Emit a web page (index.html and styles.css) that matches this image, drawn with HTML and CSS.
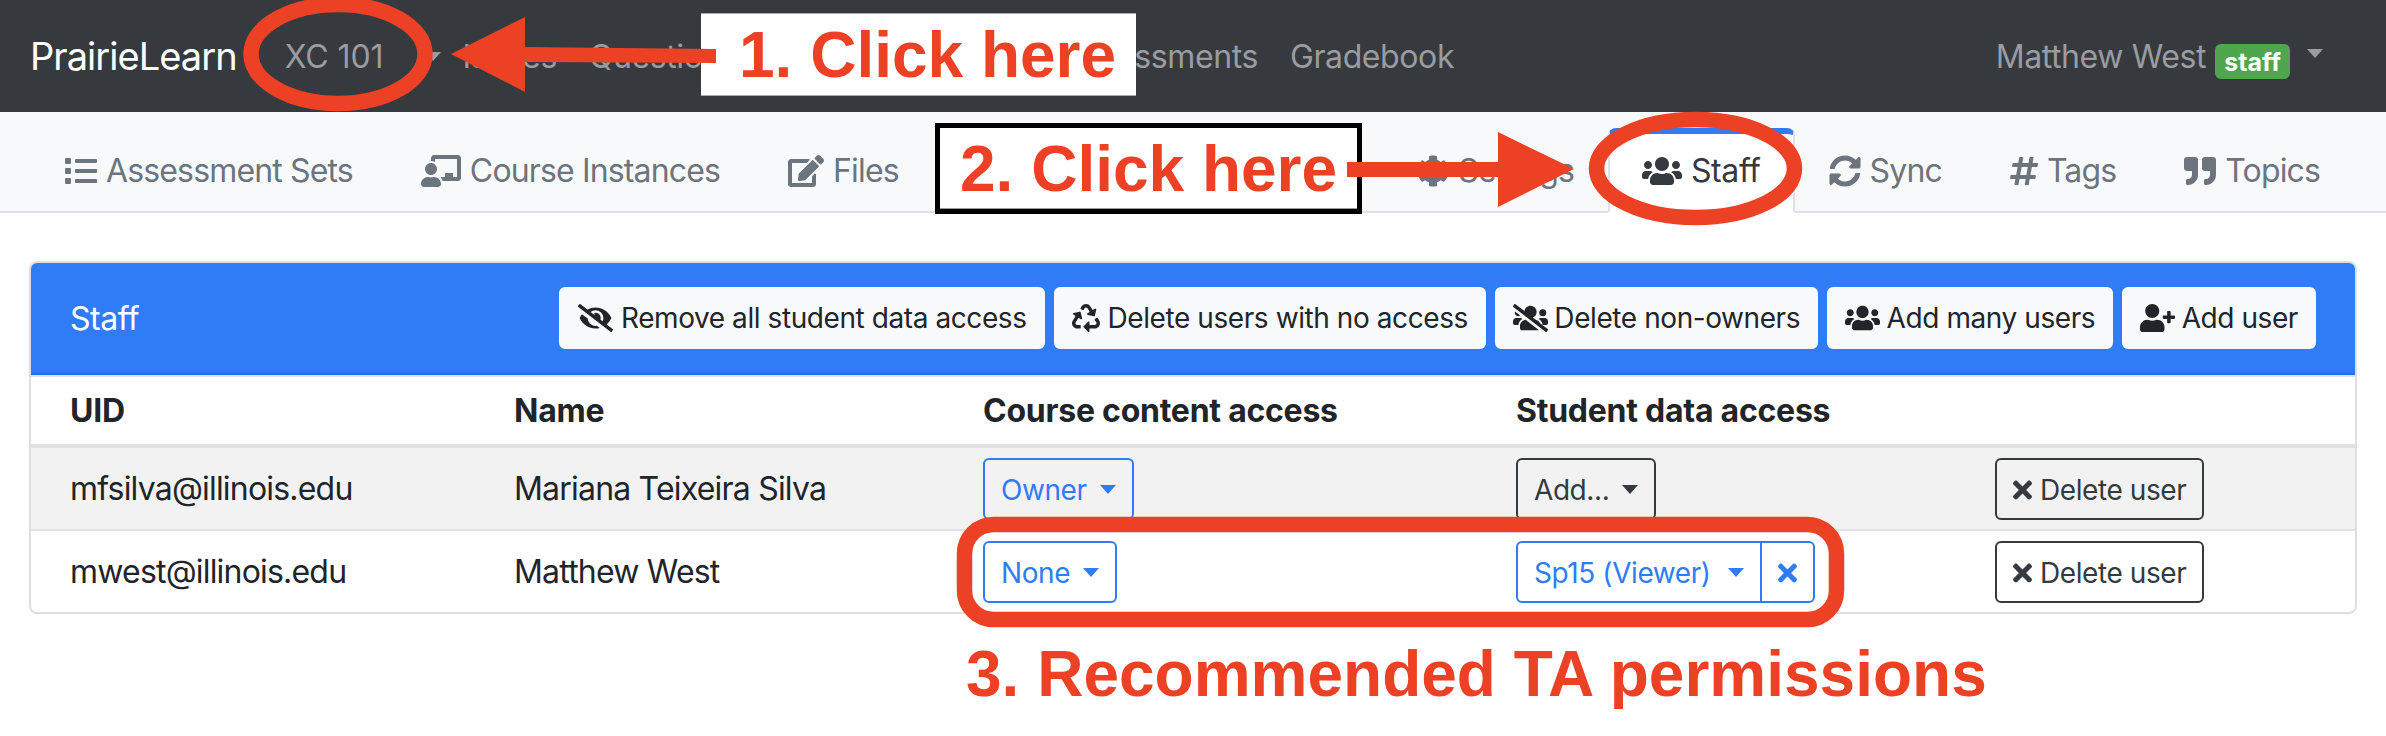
FILE: index.html
```html
<!DOCTYPE html>
<html lang="en">
<head>
<meta charset="utf-8">
<title>PrairieLearn Staff</title>
<link rel="stylesheet" href="styles.css">
</head>
<body>
<svg class="sprite" width="0" height="0" aria-hidden="true">
  <symbol id="i-users" viewBox="0 0 640 512"><path d="M96 224c35.3 0 64-28.7 64-64s-28.7-64-64-64-64 28.7-64 64 28.7 64 64 64zm448 0c35.3 0 64-28.7 64-64s-28.7-64-64-64-64 28.7-64 64 28.7 64 64 64zm32 32h-64c-17.6 0-33.5 7.1-45.1 18.6 40.3 22.1 68.9 62 75.1 109.4h66c17.7 0 32-14.3 32-32v-32c0-35.3-28.7-64-64-64zm-256 0c61.9 0 112-50.1 112-112S381.9 32 320 32 208 82.1 208 144s50.1 112 112 112zm76.8 32h-8.3c-20.8 10-43.9 16-68.5 16s-47.6-6-68.5-16h-8.3C179.6 288 128 339.6 128 403.2V432c0 26.5 21.5 48 48 48h288c26.5 0 48-21.5 48-48v-28.8c0-63.6-51.6-115.2-115.2-115.2zm-223.7-13.4C161.5 263.1 145.6 256 128 256H64c-35.3 0-64 28.7-64 64v32c0 17.7 14.3 32 32 32h65.9c6.3-47.4 34.9-87.3 75.2-109.4z"/></symbol>
  <symbol id="i-list" viewBox="0 0 512 512"><path d="M80 368H16a16 16 0 0 0-16 16v64a16 16 0 0 0 16 16h64a16 16 0 0 0 16-16v-64a16 16 0 0 0-16-16zm0-320H16A16 16 0 0 0 0 64v64a16 16 0 0 0 16 16h64a16 16 0 0 0 16-16V64a16 16 0 0 0-16-16zm0 160H16a16 16 0 0 0-16 16v64a16 16 0 0 0 16 16h64a16 16 0 0 0 16-16v-64a16 16 0 0 0-16-16zm416 176H176a16 16 0 0 0-16 16v32a16 16 0 0 0 16 16h320a16 16 0 0 0 16-16v-32a16 16 0 0 0-16-16zm0-320H176a16 16 0 0 0-16 16v32a16 16 0 0 0 16 16h320a16 16 0 0 0 16-16V80a16 16 0 0 0-16-16zm0 160H176a16 16 0 0 0-16 16v32a16 16 0 0 0 16 16h320a16 16 0 0 0 16-16v-32a16 16 0 0 0-16-16z"/></symbol>
  <symbol id="i-teacher" viewBox="0 0 640 512"><path d="M208 352c-2.39 0-4.78.35-7.06 1.09C187.98 357.3 174.35 360 160 360c-14.35 0-27.98-2.7-40.95-6.91-2.28-.74-4.66-1.09-7.05-1.09C49.94 352-.33 402.48 0 464.62.14 490.88 21.73 512 48 512h224c26.27 0 47.86-21.12 48-47.38.33-62.14-49.94-112.62-112-112.62zm-48-32c53.02 0 96-42.98 96-96s-42.98-96-96-96-96 42.98-96 96 42.98 96 96 96zM592 0H208c-26.47 0-48 22.25-48 49.59V96c23.42 0 45.1 6.78 64 17.8V64h352v288h-64v-64H384v64h-76.24c19.1 16.69 33.12 38.73 39.69 64H592c26.47 0 48-22.25 48-49.59V49.59C640 22.25 618.47 0 592 0z"/></symbol>
  <symbol id="i-edit" viewBox="0 0 576 512"><path d="M402.6 83.2l90.2 90.2c3.8 3.8 3.8 10 0 13.8L274.4 405.6l-92.8 10.3c-12.4 1.4-22.9-9.1-21.5-21.5l10.3-92.8L388.8 83.2c3.8-3.8 10-3.8 13.8 0zm162-22.9l-48.8-48.8c-15.2-15.2-39.9-15.2-55.2 0l-35.4 35.4c-3.8 3.8-3.8 10 0 13.8l90.2 90.2c3.8 3.8 10 3.8 13.8 0l35.4-35.4c15.2-15.3 15.2-40 0-55.2zM384 346.2V448H64V128h229.8c3.2 0 6.2-1.3 8.5-3.5l40-40c7.6-7.6 2.2-20.5-8.5-20.5H48C21.5 64 0 85.5 0 112v352c0 26.5 21.5 48 48 48h352c26.5 0 48-21.5 48-48V306.2c0-10.7-12.9-16-20.5-8.5l-40 40c-2.2 2.3-3.5 5.3-3.5 8.5z"/></symbol>
  <symbol id="i-sync" viewBox="0 0 512 512"><path d="M370.72 133.28C339.458 104.008 298.888 87.962 255.848 88c-77.458.068-144.328 53.178-162.791 126.85-1.344 5.363-6.122 9.15-11.651 9.15H24.103c-7.498 0-13.194-6.807-11.807-14.176C33.933 94.924 134.813 8 256 8c66.448 0 126.791 26.136 171.315 68.685L463.03 40.97C478.149 25.851 504 36.559 504 57.941V192c0 13.255-10.745 24-24 24H345.941c-21.382 0-32.09-25.851-16.971-40.971l41.75-41.749zM32 296h134.059c21.382 0 32.09 25.851 16.971 40.971l-41.75 41.75c31.262 29.273 71.835 45.319 114.876 45.28 77.418-.07 144.315-53.144 162.787-126.849 1.344-5.363 6.122-9.15 11.651-9.15h57.304c7.498 0 13.194 6.807 11.807 14.176C478.067 417.076 377.187 504 256 504c-66.448 0-126.791-26.136-171.315-68.685L48.97 471.03C33.851 486.149 8 475.441 8 454.059V320c0-13.255 10.745-24 24-24z"/></symbol>
  <symbol id="i-hash" viewBox="0 0 448 512"><path d="M440.667 182.109l7.143-40c1.313-7.355-4.342-14.109-11.813-14.109h-74.81l14.623-81.891C377.123 38.754 371.468 32 363.997 32h-40.632a12 12 0 0 0-11.813 9.891L296.175 128H197.54l14.623-81.891C213.477 38.754 207.822 32 200.35 32h-40.632a12 12 0 0 0-11.813 9.891L132.528 128H53.432a12 12 0 0 0-11.813 9.891l-7.143 40C33.163 185.246 38.818 192 46.289 192h74.81L98.242 320H19.146a12 12 0 0 0-11.813 9.891l-7.143 40C-1.123 377.246 4.532 384 12.003 384h74.81L72.19 465.891C70.877 473.246 76.532 480 84.003 480h40.632a12 12 0 0 0 11.813-9.891L151.826 384h98.634l-14.623 81.891C234.523 473.246 240.178 480 247.65 480h40.632a12 12 0 0 0 11.813-9.891L315.472 384h79.096a12 12 0 0 0 11.813-9.891l7.143-40c1.313-7.355-4.342-14.109-11.813-14.109h-74.81l22.857-128h79.096a12 12 0 0 0 11.813-9.891zM261.889 320h-98.634l22.857-128h98.634l-22.857 128z"/></symbol>
  <symbol id="i-quote" viewBox="0 0 512 512"><path d="M464 32H336c-26.5 0-48 21.5-48 48v128c0 26.5 21.5 48 48 48h80v64c0 35.3-28.7 64-64 64h-8c-13.3 0-24 10.7-24 24v48c0 13.3 10.7 24 24 24h8c88.4 0 160-71.6 160-160V80c0-26.5-21.5-48-48-48zm-288 0H48C21.5 32 0 53.5 0 80v128c0 26.5 21.5 48 48 48h80v64c0 35.3-28.7 64-64 64h-8c-13.3 0-24 10.7-24 24v48c0 13.3 10.7 24 24 24h8c88.4 0 160-71.6 160-160V80c0-26.5-21.5-48-48-48z"/></symbol>
  <symbol id="i-cog" viewBox="0 0 512 512"><path d="M487.4 315.7l-42.6-24.6c4.3-23.2 4.3-47 0-70.2l42.6-24.6c4.9-2.8 7.1-8.6 5.5-14-11.1-35.6-30-67.8-54.7-94.6-3.8-4.1-10-5.1-14.8-2.3L380.8 110c-17.9-15.4-38.5-27.3-60.8-35.1V25.8c0-5.6-3.9-10.5-9.4-11.7-36.7-8.2-74.3-7.8-109.2 0-5.5 1.2-9.4 6.1-9.4 11.7V75c-22.2 7.9-42.8 19.8-60.8 35.1L88.7 85.5c-4.9-2.8-11-1.9-14.8 2.3-24.7 26.7-43.6 58.9-54.7 94.6-1.7 5.4.6 11.2 5.5 14L67.3 221c-4.3 23.2-4.3 47 0 70.2l-42.6 24.6c-4.9 2.8-7.1 8.6-5.5 14 11.1 35.6 30 67.8 54.7 94.6 3.8 4.1 10 5.1 14.8 2.3l42.6-24.6c17.9 15.4 38.5 27.3 60.8 35.1v49.2c0 5.6 3.9 10.5 9.4 11.7 36.7 8.2 74.3 7.8 109.2 0 5.5-1.2 9.4-6.1 9.4-11.7v-49.2c22.2-7.9 42.8-19.8 60.8-35.1l42.6 24.6c4.9 2.8 11 1.9 14.8-2.3 24.7-26.7 43.6-58.9 54.7-94.6 1.5-5.5-.7-11.3-5.6-14.1zM256 336c-44.1 0-80-35.9-80-80s35.9-80 80-80 80 35.9 80 80-35.9 80-80 80z"/></symbol>
  <symbol id="i-times" viewBox="0 0 352 512"><path d="M242.72 256l100.07-100.07c12.28-12.28 12.28-32.19 0-44.48l-22.24-22.24c-12.28-12.28-32.19-12.28-44.48 0L176 189.28 75.93 89.21c-12.28-12.28-32.19-12.28-44.48 0L9.21 111.45c-12.28 12.28-12.28 32.19 0 44.48L109.28 256 9.21 356.07c-12.28 12.28-12.28 32.19 0 44.48l22.24 22.24c12.28 12.28 32.2 12.28 44.48 0L176 322.72l100.07 100.07c12.28 12.28 32.2 12.28 44.48 0l22.24-22.24c12.28-12.28 12.28-32.19 0-44.48L242.72 256z"/></symbol>
  <symbol id="i-user-plus" viewBox="0 0 640 512"><path d="M624 208h-64v-64c0-8.8-7.2-16-16-16h-32c-8.8 0-16 7.2-16 16v64h-64c-8.8 0-16 7.2-16 16v32c0 8.8 7.2 16 16 16h64v64c0 8.8 7.2 16 16 16h32c8.8 0 16-7.2 16-16v-64h64c8.8 0 16-7.2 16-16v-32c0-8.8-7.2-16-16-16zm-400 48c70.7 0 128-57.3 128-128S294.7 0 224 0 96 57.3 96 128s57.3 128 128 128zm89.6 32h-16.7c-22.2 10.2-46.9 16-72.9 16s-50.6-5.8-72.9-16h-16.7C60.2 288 0 348.2 0 422.4V464c0 26.5 21.5 48 48 48h352c26.5 0 48-21.5 48-48v-41.6c0-74.2-60.2-134.4-134.4-134.4z"/></symbol>
  <symbol id="i-eye-slash" viewBox="0 0 640 512"><path d="M320 400c-75.85 0-137.25-58.71-142.9-133.11L72.2 185.82c-13.79 17.3-26.48 35.59-36.72 55.59a32.35 32.35 0 0 0 0 29.19C89.71 376.41 197.07 448 320 448c26.91 0 52.87-4 77.89-10.46L346 397.39a144.13 144.13 0 0 1-26 2.61zm313.82 58.1l-110.55-85.44a331.25 331.25 0 0 0 81.25-102.07 32.35 32.35 0 0 0 0-29.19C550.29 135.59 442.93 64 320 64a308.15 308.15 0 0 0-147.32 37.7L45.46 3.37A16 16 0 0 0 23 6.18L3.37 31.45A16 16 0 0 0 6.18 53.9l588.36 454.73a16 16 0 0 0 22.46-2.81l19.64-25.27a16 16 0 0 0-2.82-22.45zm-183.72-142l-39.3-30.38A94.75 94.75 0 0 0 416 256a94.76 94.76 0 0 0-121.31-92.21A47.65 47.65 0 0 1 304 192a46.64 46.64 0 0 1-1.54 10l-73.61-56.89A142.31 142.31 0 0 1 320 112a143.92 143.92 0 0 1 144 144c0 21.63-5.29 41.79-13.9 60.11z"/></symbol>
  <symbol id="i-recycle" viewBox="0 0 512 512"><path d="M184.561 261.903c3.232 13.997-12.123 24.635-24.068 17.168l-40.736-25.455-50.867 81.402C55.606 356.273 70.96 384 96.012 384H148c6.627 0 12 5.373 12 12v40c0 6.627-5.373 12-12 12H96.115c-75.334 0-121.302-83.048-81.408-146.88l50.822-81.388-40.725-25.448c-12.081-7.547-8.966-25.961 4.879-29.158l110.237-25.45c8.611-1.988 17.201 3.381 19.189 11.99l25.452 110.237zm98.561-182.915l41.289 66.076-40.74 25.457c-12.051 7.528-9 25.953 4.879 29.158l110.237 25.45c8.672 1.999 17.215-3.438 19.189-11.99l25.45-110.237c3.197-13.844-11.99-24.719-24.068-17.168l-40.687 25.424-41.263-66.082c-37.521-60.033-125.209-60.171-162.816 0l-17.963 28.766c-3.51 5.62-1.8 13.021 3.82 16.533l33.919 21.195c5.62 3.512 13.024 1.803 16.536-3.817l17.961-28.743c12.712-20.341 41.973-19.676 54.257-.022zM497.288 301.12l-27.515-44.065c-3.511-5.623-10.916-7.334-16.538-3.821l-33.861 21.159c-5.62 3.512-7.33 10.915-3.818 16.536l27.564 44.112c13.257 21.211-2.057 48.96-27.136 48.96H320V336.02c0-14.213-17.242-21.383-27.313-11.313l-80 79.981c-6.249 6.248-6.249 16.379 0 22.627l80 79.989C302.689 517.308 320 510.3 320 495.989V448h95.88c75.274 0 121.335-82.997 81.408-146.88z"/></symbol>
  <symbol id="i-users-slash" viewBox="0 0 640 512"><path d="M132.65 212.32 36.21 137.78A63.4 63.4 0 0 0 32 160a63.84 63.84 0 0 0 100.65 52.32Zm40.44 62.28A63.79 63.79 0 0 0 128 256H64A64.06 64.06 0 0 0 0 320v32a32 32 0 0 0 32 32H97.91A146.62 146.62 0 0 1 173.09 274.6ZM544 224a64 64 0 1 0-64-64A64.06 64.06 0 0 0 544 224ZM500.56 355.11a114.24 114.24 0 0 0-84.47-65.28L361 247.23c41.46-16.3 71-55.92 71-103.23A111.93 111.93 0 0 0 320 32c-57.14 0-103.69 42.83-110.6 98.08L45.46 3.38A16 16 0 0 0 23 6.19L3.37 31.46A16 16 0 0 0 6.18 53.91L594.54 508.63A16 16 0 0 0 617 505.82l19.64-25.27a16 16 0 0 0-2.81-22.45ZM128 403.21V432a48 48 0 0 0 48 48H464a47.45 47.45 0 0 0 12.57-1.87L232 289.13C173.74 294.83 128 343.42 128 403.21ZM576 256H512a63.79 63.79 0 0 0-45.09 18.6A146.29 146.29 0 0 1 542 384h66a32 32 0 0 0 32-32V320A64.06 64.06 0 0 0 576 256Z"/></symbol>
</svg>

<div class="page">
  <header class="topbar">
    <a class="brand">PrairieLearn</a>
    <a class="top-link course">XC 101</a>
    <span class="caret top-caret"></span>
    <a class="top-link">Issues</a>
    <a class="top-link">Questions</a>
    <a class="top-link assess">Assessments</a>
    <a class="top-link">Gradebook</a>
    <div class="user">
      <span class="top-link">Matthew West</span>
      <span class="badge">staff</span>
      <span class="caret user-caret"></span>
    </div>
  </header>

  <nav class="subnav">
    <a class="tab"><svg class="ic w16"><use href="#i-list"/></svg>Assessment Sets</a>
    <a class="tab"><svg class="ic w20"><use href="#i-teacher"/></svg>Course Instances</a>
    <a class="tab"><svg class="ic w18"><use href="#i-edit"/></svg>Files</a>
    <a class="tab">Questions</a>
    <a class="tab settings"><svg class="ic w16"><use href="#i-cog"/></svg>Settings</a>
    <a class="tab active"><svg class="ic w20"><use href="#i-users"/></svg>Staff</a>
    <a class="tab"><svg class="ic w16"><use href="#i-sync"/></svg>Sync</a>
    <a class="tab"><svg class="ic w14"><use href="#i-hash"/></svg>Tags</a>
    <a class="tab"><svg class="ic w16"><use href="#i-quote"/></svg>Topics</a>
  </nav>

  <main class="content">
    <section class="card">
      <div class="card-header">
        <span class="card-title">Staff</span>
        <div class="actions">
          <button class="btn light"><svg class="ic-sm wide eye"><use href="#i-eye-slash"/></svg>Remove all student data access</button>
          <button class="btn light"><svg class="ic-sm"><use href="#i-recycle"/></svg>Delete users with no access</button>
          <button class="btn light"><svg class="ic-sm wide"><use href="#i-users-slash"/></svg>Delete non-owners</button>
          <button class="btn light"><svg class="ic-sm wide"><use href="#i-users"/></svg>Add many users</button>
          <button class="btn light"><svg class="ic-sm wide"><use href="#i-user-plus"/></svg>Add user</button>
        </div>
      </div>
      <table class="staff">
        <colgroup>
          <col class="c-uid"><col class="c-name"><col class="c-course"><col class="c-student"><col class="c-del">
        </colgroup>
        <thead>
          <tr><th>UID</th><th>Name</th><th>Course content access</th><th>Student data access</th><th></th></tr>
        </thead>
        <tbody>
          <tr class="shaded">
            <td>mfsilva@illinois.edu</td>
            <td>Mariana Teixeira Silva</td>
            <td><button class="btn blue">Owner<span class="caret"></span></button></td>
            <td><button class="btn dark">Add...<span class="caret"></span></button></td>
            <td><button class="btn dark"><svg class="ic-x"><use href="#i-times"/></svg>Delete user</button></td>
          </tr>
          <tr>
            <td>mwest@illinois.edu</td>
            <td>Matthew West</td>
            <td><button class="btn blue">None<span class="caret"></span></button></td>
            <td>
              <div class="btn-group">
                <button class="btn blue">Sp15 (Viewer)<span class="caret"></span></button>
                <button class="btn blue close"><svg class="ic-x"><use href="#i-times"/></svg></button>
              </div>
            </td>
            <td><button class="btn dark"><svg class="ic-x"><use href="#i-times"/></svg>Delete user</button></td>
          </tr>
        </tbody>
      </table>
    </section>
  </main>

  <div class="label label-one">1. Click here</div>
  <div class="label label-two">2. Click here</div>
  <div class="label label-three">3. Recommended TA permissions</div>
  <svg class="marks" width="2386" height="736" viewBox="0 0 2386 736" aria-hidden="true">
    <ellipse class="ring" cx="338" cy="54" rx="87" ry="49.5"/>
    <polygon class="fill" points="451,54 525,17 525,92"/>
    <polygon class="fill" points="524,47 716,49 716,63 524,62"/>
    <ellipse class="ring" cx="1695.5" cy="168.5" rx="99" ry="49"/>
    <polygon class="fill" points="1574,169 1498,132 1498,207"/>
    <rect class="fill" x="1347" y="162" width="152" height="15"/>
    <rect class="ring" x="964.5" y="524.5" width="872" height="95" rx="29"/>
  </svg>
</div>
</body>
</html>
```

FILE: styles.css
```css
* { box-sizing: border-box; }
html, body { margin: 0; padding: 0; background: #fff; overflow: hidden; }
body { font-family: Inter, "Liberation Sans", sans-serif; font-size: 32px; color: #212529; }
.sprite { position: absolute; }
.page { position: relative; width: 2386px; height: 736px; overflow: hidden; }

/* top bar */
.topbar { height: 112px; background: #363a3f; display: flex; align-items: center; padding-left: 30px; font-size: 32px; }
.brand { font-size: 38px; color: #fff; margin-right: 48px; letter-spacing: -0.95px; }
.top-link { color: #9a9c9f; letter-spacing: -0.4px; margin-right: 32px; white-space: nowrap; }
.course { margin-right: 42px; letter-spacing: -0.1px; }
.caret { display: inline-block; border-top: 9px solid currentColor; border-left: 8.5px solid transparent; border-right: 8.5px solid transparent; margin-left: 13px; vertical-align: 6px; }
.top-caret { color: #9a9c9f; margin-left: 0; margin-right: 21px; }
.assess { margin-left: 292px; }
.user { margin-left: auto; display: flex; align-items: center; padding-right: 63px; }
.user .top-link { margin-right: 9px; }
.badge { background: #4fa64f; color: #fff; font-size: 25px; font-weight: 700; height: 35px; width: 75px; border-radius: 6px; display: flex; align-items: center; justify-content: center; margin-top: 11px; }
.user-caret { color: #9a9c9f; margin-left: 17px; margin-top: -5px; }

/* sub nav */
.subnav { height: 101px; background: #f8f9fa; border-bottom: 2px solid #dee2e6; display: flex; align-items: flex-start; padding: 16px 0 0 31px; }
.tab { height: 85px; padding: 0 32px; border: 2px solid transparent; display: flex; align-items: center; gap: 9px; color: #6c757d; letter-spacing: -0.85px; white-space: nowrap; font-size: 32px; }
.tab.settings { margin-left: 238px; }
.tab.active { background: #fff; color: #343a40; border-color: #dee2e6 #dee2e6 #fff; border-top: 6px solid #2f7cf6; border-radius: 8px 8px 0 0; padding-bottom: 4px; letter-spacing: -0.4px; }
.ic { height: 32px; fill: currentColor; flex: none; }
.w14 { width: 28px; }
.w16 { width: 32px; }
.w18 { width: 36px; }
.w20 { width: 40px; }

/* card */
.content { padding: 48px 29px 0; }
.card { border: 2px solid #dfdfdf; border-radius: 8px; overflow: hidden; background: #fff; }
.card-header { height: 112px; background: #2f7cf6; border-bottom: 2px solid #2a6fdd; display: flex; align-items: center; justify-content: space-between; padding: 0 39px; }
.card-title { color: #fff; font-size: 32px; letter-spacing: -0.5px; }
.actions { display: flex; gap: 9px; }

/* buttons */
.btn { height: 62px; padding: 0 16px; border-radius: 6px; font: 28px Inter, "Liberation Sans", sans-serif; letter-spacing: -0.42px; display: inline-flex; align-items: center; background: transparent; border: 2px solid transparent; white-space: nowrap; }
.light { background: #f8f9fa; border-color: #f8f9fa; color: #212529; }
.blue { color: #2f7cf6; border-color: #2f7cf6; background: #fff; }
.shaded .blue { background: transparent; }
.dark { color: #343a40; border-color: #343a40; }
.staff .btn { padding-top: 2px; }
.ic-sm { height: 28px; width: 28px; fill: currentColor; margin-right: 8px; flex: none; }
.ic-sm.wide { width: 35px; margin-right: 6.5px; }
.ic-sm.eye { margin-left: 1px; margin-right: 8px; }
.ic-x { width: 19px; height: 28px; fill: currentColor; flex: none; margin-right: 8px; }
.btn .close { padding: 0 16px; }
.close .ic-x { margin-right: 0; }
.btn-group { display: inline-flex; }
.btn-group .caret { margin-left: 17px; }
.btn-group .btn:first-child { border-radius: 6px 0 0 6px; }
.btn-group .btn:last-child { border-radius: 0 6px 6px 0; margin-left: -2px; }

/* table */
.staff { width: 100%; border-collapse: separate; border-spacing: 0; table-layout: fixed; font-size: 32px; letter-spacing: -0.8px; }
.c-uid { width: 444px; }
.c-name { width: 469px; }
.c-course { width: 533px; }
.c-student { width: 479px; }
.staff th { height: 73px; text-align: left; font-weight: 700; letter-spacing: -0.25px; padding: 0 0 0 39px; border-top: 2px solid #dee2e6; border-bottom: 4px solid #dee2e6; }
.staff td { height: 83px; padding: 0 0 0 39px; border-bottom: 2px solid #dee2e6; vertical-align: middle; }
.staff tr:last-child td { height: 81px; border-bottom: 0; }
.shaded td { background: #f2f2f2; }

/* annotations over the page */
.marks { position: absolute; left: 0; top: 0; pointer-events: none; }
.ring { fill: none; stroke: #ec4124; stroke-width: 15.5; }
.fill { fill: #ec4124; }
.label { position: absolute; font-family: "Liberation Sans", Arial, sans-serif; font-weight: 700; font-size: 64px; color: #ec4124; white-space: nowrap; line-height: 1; }
.label-one { left: 701px; top: 13px; width: 435px; height: 83px; background: #fff; border-top: 1px solid #aaa; border-bottom: 1px solid #aaa; display: flex; align-items: center; padding-left: 38px; }
.label-two { left: 935px; top: 123px; width: 427px; height: 91px; background: #fff; border: 5px solid #000; box-shadow: inset 0 -1px #999; display: flex; align-items: center; padding-left: 20px; }
.label-three { left: 966px; top: 642px; }
```
